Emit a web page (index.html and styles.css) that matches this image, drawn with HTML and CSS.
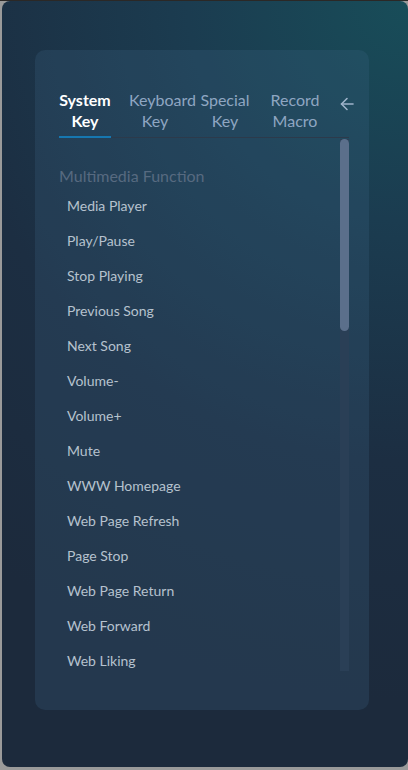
FILE: index.html
```html
<html>
<head>
    <meta charset="utf-8" />
    <meta name="viewport" content="width=device-width, initial-scale=1" />
    <title>Key Settings</title>
    <link rel="stylesheet" href="styles.css">
</head>

<body>
    <div id="window">
        <div id="card">
            <div id="tabs">
                <div class="tab active">System<br>Key</div>
                <div class="tab">Keyboard<br>Key</div>
                <div class="tab">Special<br>Key</div>
                <div class="tab">Record<br>Macro</div>
                <button id="backBtn" aria-label="Back">
                    <svg width="16" height="16" viewBox="0 0 16 16" fill="none" stroke="#9fb3ca" stroke-width="1.6" stroke-linecap="round" stroke-linejoin="round">
                        <path d="M14 8H2.5" />
                        <path d="M8 2.5L2.5 8L8 13.5" />
                    </svg>
                </button>
            </div>
            <div id="listArea">
                <div id="list">
                    <p class="group">Multimedia Function</p>
                    <div class="item">Media Player</div>
                    <div class="item">Play/Pause</div>
                    <div class="item">Stop Playing</div>
                    <div class="item">Previous Song</div>
                    <div class="item">Next Song</div>
                    <div class="item">Volume-</div>
                    <div class="item">Volume+</div>
                    <div class="item">Mute</div>
                    <div class="item">WWW Homepage</div>
                    <div class="item">Web Page Refresh</div>
                    <div class="item">Page Stop</div>
                    <div class="item">Web Page Return</div>
                    <div class="item">Web Forward</div>
                    <div class="item">Web Liking</div>
                </div>
                <div id="scrollTrack">
                    <div id="scrollThumb"></div>
                </div>
            </div>
        </div>
    </div>
</body>

</html>
```

FILE: styles.css
```css
body{
    padding: 0;
    margin: 0;
    background-color: #9a9a9a;
    border-top: 1px solid #2b2826;
    font-family: Lato, "Open Sans", sans-serif;
}
#window {
    margin-left: 2px;
    height: 766px;
    border-radius: 8px;
    padding: 49px 39px 0 33px;
    box-sizing: border-box;
    background: radial-gradient(circle at 100% 0, #184d59 0, #1b3c50 220px, #1c2e42 460px, #1c2a3c 700px);
}
#card {
    height: 660px;
    box-sizing: border-box;
    padding: 39px 20px 38px 24px;
    border-radius: 10px;
    background-color: rgba(60, 100, 130, 0.25);
}
#tabs {
    display: flex;
    align-items: flex-start;
    gap: 18px;
    border-bottom: 1px solid #2c3a4b;
}
.tab {
    flex: 0 0 52px;
    min-width: 0;
    font-size: 16px;
    line-height: 21px;
    text-align: center;
    white-space: nowrap;
    color: #8fa6c2;
    padding-bottom: 5px;
    border-bottom: 2px solid transparent;
    margin-bottom: -1px;
}
.tab.active {
    color: #ffffff;
    font-weight: bold;
    border-bottom-color: #1677b0;
}
#backBtn {
    margin-left: auto;
    margin-top: 7px;
    margin-right: 1px;
    padding: 0;
    border: 0;
    background: none;
    width: 16px;
    height: 16px;
}
#listArea {
    display: flex;
    margin-top: 1px;
    height: 532px;
}
#list {
    flex: 1;
    overflow: hidden;
    padding-top: 25px;
}
.group {
    margin: 0;
    font-size: 16px;
    line-height: 24px;
    color: #576a80;
}
.item {
    height: 35px;
    line-height: 35px;
    padding-left: 8px;
    font-size: 14px;
    color: #b6c2ce;
}
#scrollTrack {
    width: 9px;
    background-color: #2a3f56;
}
#scrollThumb {
    height: 192px;
    border-radius: 5px;
    background-color: #5b6f8b;
}
```
